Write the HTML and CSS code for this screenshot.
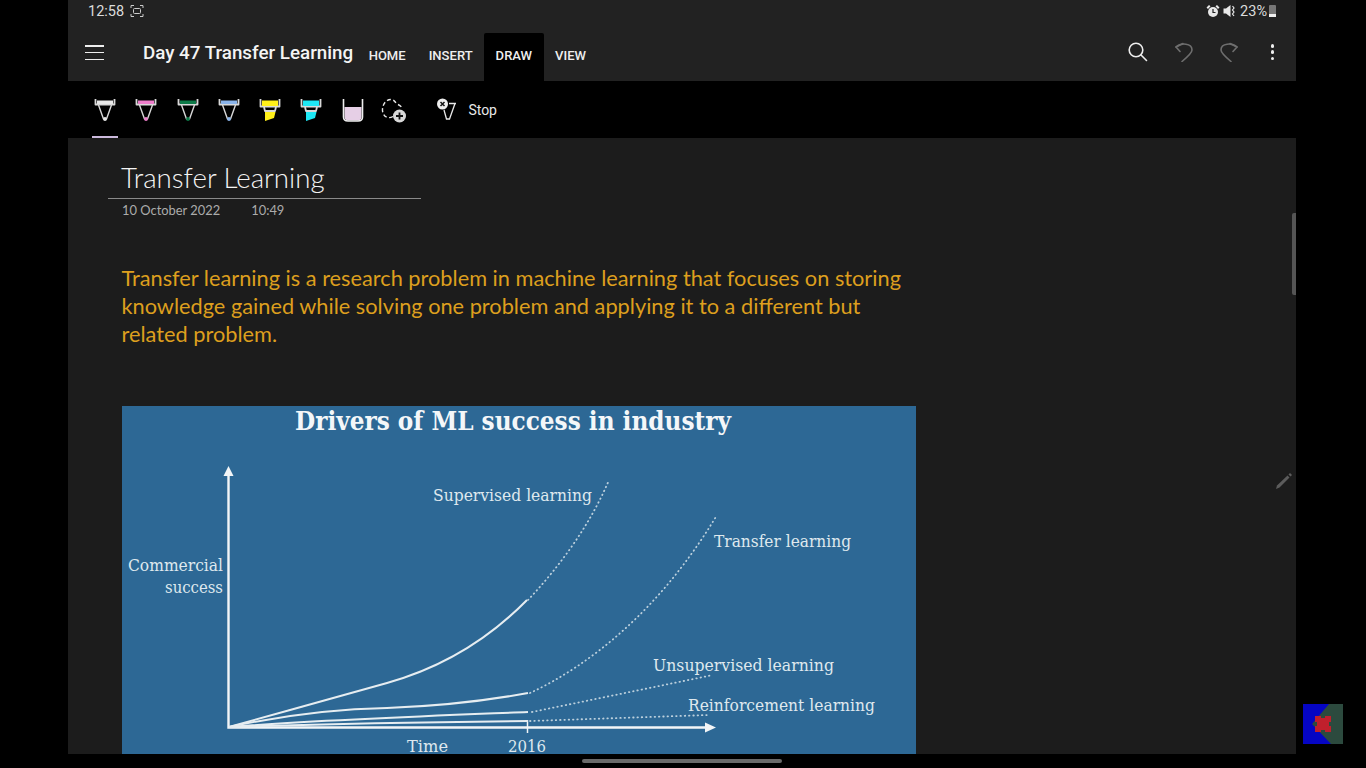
FILE: index.html
```html
<!DOCTYPE html>
<html lang="en">
<head>
<meta charset="utf-8">
<title>Day 47 Transfer Learning</title>
<link rel="stylesheet" href="styles.css">
</head>
<body>
<svg class="defs" width="0" height="0" aria-hidden="true">
  <defs>
    <symbol id="pen" viewBox="0 0 22 24">
      <path class="pen-line" d="M1.500 1V6.500H20.500V1"/>
      <rect class="pen-fill" x="3" y="2.500" width="16" height="3.500"/>
      <path class="pen-thin" d="M4.500 7L9.500 21H12.500L17.500 7"/>
      <circle class="pen-fill" cx="11" cy="21" r="1.900"/>
    </symbol>
    <symbol id="marker" viewBox="0 0 22 24">
      <path class="pen-line" d="M1.500 1V8.500H20.500V1"/>
      <rect class="pen-fill" x="3" y="2.500" width="16" height="5.500"/>
      <path class="pen-line" d="M5 9L6 13H16L17 9"/>
      <path class="pen-fill" d="M6 14H16.500L15 20L6 23Z"/>
    </symbol>
  </defs>
</svg>
<main class="device">
  <div class="status">
    <div class="status-left">
      <span>12:58</span>
      <svg class="shot" width="14" height="14" viewBox="0 0 14 14"><path d="M1 4V1.500H4M10 1.500H13V4M13 10V12.500H10M4 12.500H1V10"/><rect x="3.500" y="4.500" width="7" height="5" rx="1"/></svg>
    </div>
    <div class="status-right">
      <svg width="14" height="14" viewBox="0 0 14 14"><circle class="solid" cx="7" cy="8" r="5"/><path class="solid" d="M0.500 3.500L3 1L4.500 2.300L2 5ZM13.500 3.500L11 1L9.500 2.300L12 5Z"/><path class="cut" d="M7 5V8.500H9.500"/></svg>
      <svg width="12" height="14" viewBox="0 0 12 14"><path class="solid" d="M0.500 4.500H3L7.500 1V13L3 9.500H0.500Z"/><path class="cut-white" d="M9.500 2L11 4L9.500 6L11 8L9.500 10L11 12"/></svg>
      <span class="battery-text">23%</span>
      <span class="battery"><span class="battery-level"></span></span>
    </div>
  </div>

  <header class="appbar">
    <button class="menu" type="button" aria-label="Menu"><span></span><span></span><span></span></button>
    <h1 class="notebook">Day 47 Transfer Learning</h1>
    <nav class="tabs">
      <span class="tab">HOME</span>
      <span class="tab">INSERT</span>
      <span class="tab tab-active">DRAW</span>
      <span class="tab">VIEW</span>
    </nav>
    <div class="actions">
      <svg class="act search" width="20" height="20" viewBox="0 0 20 20"><circle cx="8" cy="8" r="6.800"/><path d="M12.800 12.800L18.500 18.500"/></svg>
      <svg class="act dim undo" width="20" height="20" viewBox="0 0 20 20"><path d="M8 1.500L1 5L5 9.500"/><path d="M1 5C6 0.500 17 1 17 8C17 11 13 14.500 7 19.500"/></svg>
      <svg class="act dim" width="20" height="20" viewBox="0 0 20 20"><path d="M12 1.500L19 5L15 9.500"/><path d="M19 5C14 0.500 3 1 3 8C3 11 7 14.500 13 19.500"/></svg>
      <span class="dots"><i></i><i></i><i></i></span>
    </div>
  </header>

  <div class="toolbar">
    <div class="tool tool-active pen-white"><svg width="22" height="24"><use href="#pen"/></svg></div>
    <div class="tool pen-pink"><svg width="22" height="24"><use href="#pen"/></svg></div>
    <div class="tool pen-green"><svg width="22" height="24"><use href="#pen"/></svg></div>
    <div class="tool pen-blue"><svg width="22" height="24"><use href="#pen"/></svg></div>
    <div class="tool pen-yellow"><svg width="22" height="24"><use href="#marker"/></svg></div>
    <div class="tool pen-cyan"><svg width="22" height="24"><use href="#marker"/></svg></div>
    <div class="tool"><svg width="22" height="24" viewBox="0 0 22 24"><path class="cup-fill" d="M2.500 9H19.500V19C19.500 21 18 22.500 16 22.500H6C4 22.500 2.500 21 2.500 19Z"/><path class="cup-line" d="M1.500 1V19C1.500 21.500 3.500 23 6 23H16C18.500 23 20.500 21.500 20.500 19V1"/></svg></div>
    <div class="tool"><svg width="26" height="26" viewBox="0 0 26 26"><path class="lasso" d="M12 18.500C6 22 1 17 1.500 11C2 5 6 1 10.500 1.500C14 2 14 5 17 6.500C19.500 7.500 21 9 21 11"/><circle class="plus-bg" cx="18.500" cy="18" r="6.500"/><path class="plus" d="M18.500 14.500V21.500M15 18H22"/></svg></div>
    <div class="stop">
      <svg width="22" height="24" viewBox="0 0 22 24"><path class="stop-pen" d="M13 5.500H20M19 5.500L13.500 21H10.500L8 12"/><circle class="stop-bg" cx="6.500" cy="6" r="5.500"/><path class="stop-x" d="M4.500 4L8.500 8M8.500 4L4.500 8"/></svg>
      <span>Stop</span>
    </div>
  </div>

  <section class="canvas">
    <div class="page-head">
      <h2 class="page-title">Transfer Learning</h2>
      <div class="page-date"><span>10 October 2022</span><span>10:49</span></div>
    </div>
    <p class="note">Transfer learning is a research problem in machine learning that focuses on storing<br>knowledge gained while solving one problem and applying it to a different but<br>related problem.</p>
    <svg class="slide" width="794" height="348" viewBox="122 406 794 348">
      <text class="slide-title" x="513" y="430" text-anchor="middle" textLength="436" lengthAdjust="spacingAndGlyphs">Drivers of ML success in industry</text>
      <text class="slide-label" x="433" y="501" textLength="159" lengthAdjust="spacingAndGlyphs">Supervised learning</text>
      <text class="slide-label" x="714" y="547" textLength="137" lengthAdjust="spacingAndGlyphs">Transfer learning</text>
      <text class="slide-label" x="653" y="671" textLength="181" lengthAdjust="spacingAndGlyphs">Unsupervised learning</text>
      <text class="slide-label" x="688" y="711" textLength="187" lengthAdjust="spacingAndGlyphs">Reinforcement learning</text>
      <text class="slide-label" x="128" y="571" textLength="95" lengthAdjust="spacingAndGlyphs">Commercial</text>
      <text class="slide-label" x="165" y="593" textLength="58" lengthAdjust="spacingAndGlyphs">success</text>
      <text class="slide-label" x="407" y="752" textLength="41" lengthAdjust="spacingAndGlyphs">Time</text>
      <text class="slide-label" x="508" y="752" textLength="38" lengthAdjust="spacingAndGlyphs">2016</text>

      <path class="axis" d="M228.500 474V727.500H708"/>
      <path class="head" d="M228.500 466L233.500 476H223.500Z"/>
      <path class="head" d="M716 727.500L705 722.500V732.500Z"/>
      <path class="axis-thin" d="M527.500 720V733"/>

      <path class="curve" d="M229 727C280 712.800 340 696 387 683C430 671 480 648 527 600"/>
      <path class="curve" d="M229 727C280 716 330 709 387 708C440 706 490 700 528 693"/>
      <path class="curve" d="M229 727C320 720 430 716 528 712"/>
      <path class="curve" d="M229 727C320 724 430 722 528 721"/>

      <path class="dots-line" d="M528 600C560 566 590 525 609 480"/>
      <path class="dots-line" d="M530 693C590 665 660 610 717 515"/>
      <path class="dots-line" d="M532 712L713 675"/>
      <path class="dots-line" d="M530 721L708 715"/>
    </svg>
  </section>
</main>

<div class="scrollbar"></div>
<svg class="pencil" width="18" height="18" viewBox="0 0 18 18"><path d="M1 17L2 13.500L12.500 3.500L14.500 5.500L4.500 15.500Z"/><path d="M13.500 2.500L15 1L17 3L15.500 4.500Z"/></svg>
<svg class="thumb" width="40" height="40" viewBox="0 0 40 40">
  <rect class="thumb-blue" width="40" height="40"/>
  <path class="thumb-green" d="M26 0H40V40H28L9 20Z"/>
  <path class="thumb-red" d="M12 12H18V14H22V12H28V18H26V22H28V28H22V26H18V28H12V22H14V18H12Z"/>
</svg>
<div class="home-bar"></div>
</body>
</html>
```
FILE: styles.css
```css
* { box-sizing: border-box; }
html, body { margin: 0; height: 100%; }
body {
  background: #000;
  overflow: hidden;
  font-family: Roboto, sans-serif;
  color: #f2f2f2;
}
.defs { position: absolute; }

.device {
  width: 1228px;
  height: 754px;
  margin-left: 68px;
  display: flex;
  flex-direction: column;
  background: #1c1c1c;
}

/* status bar */
.status {
  height: 22px;
  flex: none;
  background: #222;
  display: flex;
  align-items: center;
  justify-content: space-between;
  padding: 0 20px 0 20px;
  color: #dcdcdc;
  font-size: 14.500px;
}
.status-left, .status-right { display: flex; align-items: center; }
.status-left { gap: 6px; }
.status-right { gap: 3px; }
.shot { fill: none; stroke: #ccc; stroke-width: 1; }
.solid { fill: #e8e8e8; }
.cut { fill: none; stroke: #222; stroke-width: 1.200; }
.cut-white { fill: none; stroke: #e8e8e8; stroke-width: 1.200; }
.battery-text { margin-left: 2px; }
.battery {
  width: 7px;
  height: 12px;
  margin-left: -1px;
  background: #777;
  border-radius: 1px;
  display: flex;
  align-items: flex-end;
}
.battery-level { display: block; width: 100%; height: 3px; background: #eee; }

/* app bar */
.appbar {
  height: 59px;
  flex: none;
  background: #222;
  display: flex;
  align-items: flex-end;
  padding-left: 17px;
}
.menu {
  width: 19px;
  height: 15px;
  padding: 0;
  margin: 0 0 21px;
  background: none;
  border: 0;
  display: flex;
  flex-direction: column;
  justify-content: space-between;
}
.menu span { display: block; height: 1.500px; background: #eee; }
.notebook {
  margin: 0 0 16px 39px;
  font-size: 18.800px;
  line-height: 24px;
  font-weight: 500;
  color: #f4f4f4;
  white-space: nowrap;
}
.tabs { display: flex; margin-left: 4px; }
.tab {
  height: 48px;
  padding: 15px 11.500px 0;
  font-size: 13.050px;
  line-height: 16px;
  font-weight: 500;
  color: #eee;
}
.tab-active { background: #000; border-radius: 2px 2px 0 0; }
.actions {
  margin-left: auto;
  height: 100%;
  display: flex;
  align-items: flex-start;
  padding-top: 20px;
  padding-right: 21.500px;
  gap: 25px;
}
.act { fill: none; stroke-width: 1.600; stroke-linecap: round; stroke-linejoin: round; }
.search { stroke: #eee; }
.dim { stroke: #6e6e6e; }
.undo { margin: 0 -2px 0 2px; }
.dots {
  width: 4px;
  height: 16px;
  margin: 2px 0 0 7.500px;
  display: flex;
  flex-direction: column;
  justify-content: space-between;
}
.dots i { display: block; width: 3.500px; height: 3.500px; border-radius: 50%; background: #eee; }

/* toolbar */
.toolbar {
  height: 57px;
  flex: none;
  background: #000;
  display: flex;
  align-items: flex-start;
  padding: 17px 0 0 24px;
}
.tool {
  width: 26px;
  height: 39.500px;
  margin-right: 15.300px;
  display: flex;
  justify-content: center;
  position: relative;
}
.tool-active::after {
  content: "";
  position: absolute;
  left: 0;
  right: 0;
  bottom: 0;
  height: 1.500px;
  background: #cbb9dc;
}
.pen-line { fill: none; stroke: #d8d8d8; stroke-width: 1.800; stroke-linejoin: round; }
.pen-thin { fill: none; stroke: #d8d8d8; stroke-width: 1.400; stroke-linejoin: round; }
.pen-white { --ink: #e8e8e8; }
.pen-pink { --ink: #ee7ecb; }
.pen-green { --ink: #0d7a48; }
.pen-blue { --ink: #8ab4ea; }
.pen-yellow { --ink: #ffef1a; }
.pen-cyan { --ink: #1ee8f5; }
.pen-fill { fill: var(--ink); }
.cup-fill { fill: #e6cfe6; }
.cup-line { fill: none; stroke: #eee; stroke-width: 1.600; }
.lasso { fill: none; stroke: #e8e8e8; stroke-width: 1.400; stroke-dasharray: 4 2.500; }
.plus-bg { fill: #d8d8d8; }
.plus { fill: none; stroke: #111; stroke-width: 1.800; }
.stop {
  display: flex;
  align-items: center;
  gap: 10px;
  height: 23px;
  margin-left: 14px;
  font-size: 14px;
  color: #e8e8e8;
}
.stop-pen { fill: none; stroke: #e8e8e8; stroke-width: 1.300; }
.stop-bg { fill: #eee; }
.stop-x { fill: none; stroke: #111; stroke-width: 1.500; }

/* page */
.canvas {
  flex: 1;
  min-height: 0;
  padding: 22px 0 0 54px;
  font-family: Lato, sans-serif;
}
.page-head {
  width: 313px;
  margin-left: -14px;
}
.page-title {
  margin: 0;
  padding: 0 0 3px 13px;
  font-size: 27.700px;
  line-height: 35px;
  font-weight: 300;
  color: #f4f4f4;
  border-bottom: 1px solid #8a8a8a;
}
.page-date {
  display: flex;
  gap: 31px;
  padding: 3px 0 0 14px;
  font-size: 12.900px;
  line-height: 17px;
  color: #ababab;
}
.note {
  margin: 45px 0 58px -0.500px;
  font-size: 21.750px;
  line-height: 28px;
  color: #dd9f1e;
  white-space: nowrap;
}
.slide { display: block; background: #2d6895; overflow: visible; }
.slide-title {
  font-family: "DejaVu Serif", serif;
  font-size: 26px;
  font-weight: 700;
  fill: #f4f7f9;
}
.slide-label {
  font-family: "DejaVu Serif", serif;
  font-size: 17px;
  fill: #dfe8ee;
}
.axis { fill: none; stroke: #f2f5f7; stroke-width: 2.400; }
.axis-thin { fill: none; stroke: #f2f5f7; stroke-width: 1.500; }
.head { fill: #f2f5f7; }
.curve { fill: none; stroke: #e6edf1; stroke-width: 2; }
.dots-line {
  fill: none;
  stroke: #bcd0dd;
  stroke-width: 1.800;
  stroke-linecap: round;
  stroke-dasharray: 0.500 3.800;
}

/* overlays */
.scrollbar {
  position: absolute;
  left: 1292px;
  top: 213px;
  width: 4px;
  height: 82px;
  border-radius: 2px 0 0 2px;
  background: #555;
}
.pencil { position: absolute; left: 1275px; top: 472px; fill: #5c5c5c; }
.thumb { position: absolute; left: 1303px; top: 704px; }
.thumb-blue { fill: #0505c4; }
.thumb-green { fill: #2c4a3e; }
.thumb-red { fill: #c01f2c; }
.home-bar {
  position: absolute;
  left: 582px;
  top: 759px;
  width: 200px;
  height: 4px;
  border-radius: 2px;
  background: #6a6a6a;
}
```
